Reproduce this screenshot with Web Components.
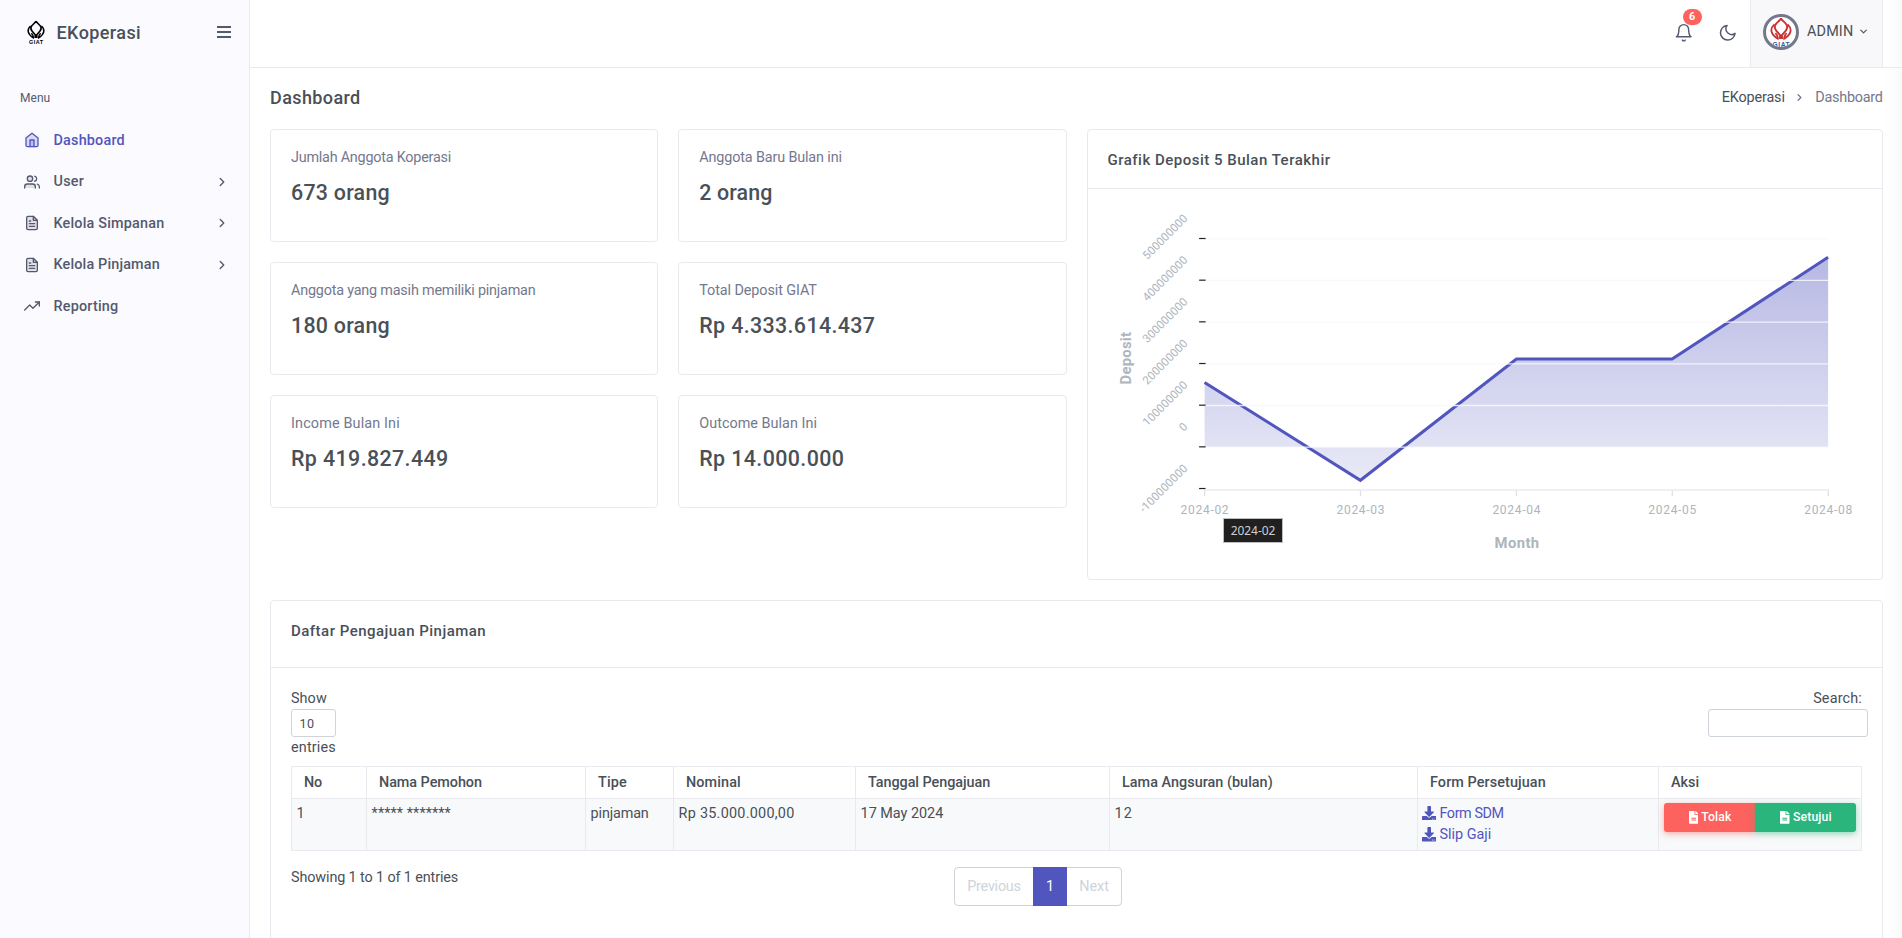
<!DOCTYPE html>
<html lang="id">
<head>
<meta charset="utf-8">
<title>EKoperasi - Dashboard</title>
<style>
html,body{margin:0;height:100%;overflow:hidden}
body{font-family:Roboto,"Noto Sans",sans-serif;font-size:14.4px;line-height:21.6px;color:#495057;background:#fff}
</style>
</head>
<body>
<ek-app></ek-app>
<script>
const define = (name, html, init) => {
  const tpl = document.createElement('template');
  tpl.innerHTML = html;
  customElements.define(name, class extends HTMLElement {
    connectedCallback() {
      if (this.shadowRoot) return;
      const root = this.attachShadow({ mode: 'open' });
      const copy = tpl.content.cloneNode(true);
      if (init) init.call(this, copy);
      root.appendChild(copy);
    }
  });
};

/* Inline text tracked to a given ink width (attribute w, px). */
const tracked = [];
customElements.define('ek-text', class extends HTMLElement {
  connectedCallback() {
    if (this.shadowRoot) return;
    this.attachShadow({ mode: 'open' }).innerHTML =
      '<style>:host{display:inline-block;white-space:nowrap}</style><slot></slot>';
    tracked.push(this);
  }
  track() {
    const w = parseFloat(this.getAttribute('w'));
    const n = this.textContent.length;
    if (!w || n < 2) return;
    this.style.letterSpacing = '0px';
    const natural = this.getBoundingClientRect().width;
    this.style.letterSpacing = ((w + .7 - natural) / (n - 1)).toFixed(3) + 'px';
  }
});

const ICONS = {
  home: '<path d="M3 9l9-7 9 7v11a2 2 0 0 1-2 2H5a2 2 0 0 1-2-2z"/><path d="M9 22V12h6v10"/>',
  users: '<path d="M17 21v-2a4 4 0 0 0-4-4H5a4 4 0 0 0-4 4v2"/><circle cx="9" cy="7" r="4"/><path d="M23 21v-2a4 4 0 0 0-3-3.87" fill="none"/><path d="M16 3.13a4 4 0 0 1 0 7.75" fill="none"/>',
  file: '<path d="M14 2H6a2 2 0 0 0-2 2v16a2 2 0 0 0 2 2h12a2 2 0 0 0 2-2V8z"/><path d="M14 2v6h6M16 13H8M16 17H8M10 9H8"/>',
  trend: '<path d="M23 6l-9.500 9.500-5-5L1 18" fill="none"/><path d="M17 6h6v6"/>',
  bell: '<path d="M18 8A6 6 0 0 0 6 8c0 7-3 9-3 9h18s-3-2-3-9" fill="none"/><path d="M13.730 21a2 2 0 0 1-3.460 0" fill="none"/>',
  moon: '<path d="M21 12.790A9 9 0 1 1 11.210 3 7 7 0 0 0 21 12.790z" fill="none"/>',
  right: '<path d="M9 18l6-6-6-6" fill="none"/>',
  down: '<path d="M6 9l6 6 6-6" fill="none"/>'
};
define('ek-icon', `<style>:host{display:inline-block;flex:none;width:16px;height:16px}svg{display:block;width:100%;height:100%;overflow:visible;fill:var(--icon-fill,none);stroke:currentColor;stroke-width:var(--icon-stroke,2);stroke-linecap:round;stroke-linejoin:round}</style><svg viewBox="0 0 24 24"></svg>`,
  function (c) { c.querySelector('svg').innerHTML = ICONS[this.getAttribute('name')]; });

define('ek-emblem', `<style>:host{display:block;width:18px;height:25px;flex:none}svg{display:block;width:100%;height:100%;overflow:visible;fill:none;stroke:var(--mark,#000)}text{font:700 5.400px "Liberation Sans",sans-serif;fill:var(--word,#000);stroke:none}</style>
<svg viewBox="0 0 18 25"><path d="M9 1.200C7.500 3.500 5.500 4.500 4.300 6.500C3.400 8.200 4 9.800 5.200 11.300L8.200 14.800V18M9 1.200C10.500 3.500 12.500 4.500 13.700 6.500C14.600 8.200 14 9.800 12.800 11.300L9.800 14.800V18" stroke-width="1.600"/><path d="M3.600 6C-.4 9.600 .4 14.200 6.400 17.800C6.700 16 5.800 14.600 4.400 13.200M14.400 6C18.400 9.600 17.600 14.200 11.600 17.800C11.300 16 12.200 14.600 13.600 13.200" stroke-width="1.500"/><text x="2" y="24.200" textLength="14">GIAT</text></svg>`);

define('ek-nav-item', `<style>
:host{display:flex;align-items:center;height:41.500px;padding:0 24px;color:#545a6d;font-weight:500;--icon-fill:rgba(84,90,109,.15)}
:host([active]){color:#5156be;--icon-fill:rgba(81,86,190,.2)}
.label{margin-left:13.500px;flex:1;padding-top:1px}
.more{width:14px;height:14px;margin-right:-3.700px;--icon-stroke:2.4}
</style><ek-icon class="lead"></ek-icon><span class="label"><slot></slot></span>`,
  function (c) {
    c.querySelector('.lead').setAttribute('name', this.getAttribute('icon'));
    if (this.hasAttribute('more')) {
      const m = document.createElement('ek-icon');
      m.className = 'more'; m.setAttribute('name', 'right');
      c.appendChild(m);
    }
  });

define('ek-sidebar', `<style>
:host{display:block;background:#fbfaff;border-right:1px solid #e9e9ef;box-sizing:border-box;width:250px}
header{display:flex;align-items:center;height:67px;box-sizing:border-box;padding:0 18px 3px 27px;margin-bottom:20.500px}
h1{margin:1.500px auto 0 11.500px;font-size:18px;font-weight:500;line-height:22px;color:#495057}
.burger{width:14px;height:12px;display:flex;flex-direction:column;justify-content:space-between}
.burger i{height:2px;background:#545a6d}
.title{font-size:12px;padding-left:20px;line-height:21px;height:32px;color:#545a6d}
</style>
<header><ek-emblem></ek-emblem><h1><ek-text w="83.500">EKoperasi</ek-text></h1><span class="burger"><i></i><i></i><i></i></span></header>
<div class="title"><ek-text w="29.500">Menu</ek-text></div>
<nav>
<ek-nav-item icon="home" active><ek-text w="70.500">Dashboard</ek-text></ek-nav-item>
<ek-nav-item icon="users" more><ek-text w="29.700">User</ek-text></ek-nav-item>
<ek-nav-item icon="file" more><ek-text w="110">Kelola Simpanan</ek-text></ek-nav-item>
<ek-nav-item icon="file" more><ek-text w="105.500">Kelola Pinjaman</ek-text></ek-nav-item>
<ek-nav-item icon="trend"><ek-text w="64">Reporting</ek-text></ek-nav-item>
</nav>`);

define('ek-topbar', `<style>
:host{display:flex;justify-content:flex-end;height:67px;border-bottom:1px solid #e9e9ef;color:#545a6d;padding-right:19px}
.tool{display:flex;align-items:center;position:relative;height:67px;padding-bottom:1px;box-sizing:border-box;--icon-stroke:1.800}
.tool ek-icon{width:19.500px;height:19.500px}
.bell{margin-right:24.500px}
.badge{position:absolute;left:9px;top:9px;width:19px;height:16px;border-radius:8px;background:#fd625e;color:#fff;font-size:10.800px;font-weight:700;line-height:16px;text-align:center}
.moon{margin-right:12.800px}
.user{display:flex;align-items:center;width:133px;height:67px;background:#f8f8fb;border:solid #e9e9ef;border-width:0 1px;padding-left:12px;box-sizing:border-box}
.pic{width:30px;height:30px;border:3px solid #74788d;border-radius:50%;overflow:hidden;background:#fff;display:flex;justify-content:center;margin-top:-3px;--mark:#cb3234;--word:#3c5a9c}
.pic ek-emblem{width:22px;height:30.500px}
.name{margin-left:8px;color:#495057;margin-top:-4px}
.user>ek-icon{width:11px;height:11px;margin-left:4.500px;margin-top:-5px}
</style>
<div class="tool bell"><ek-icon name="bell"></ek-icon><span class="badge">6</span></div>
<div class="tool moon"><ek-icon name="moon"></ek-icon></div>
<div class="user"><span class="pic"><ek-emblem></ek-emblem></span><span class="name"><ek-text w="45.500">ADMIN</ek-text></span><ek-icon name="down" style="--icon-stroke:2.800"></ek-icon></div>`);

define('ek-card', `<style>
:host{display:block;border:1px solid #e9e9ef;border-radius:4px;background:#fff;box-sizing:border-box;min-width:0}
header{padding:19px 20px 0;height:var(--head,58px);box-sizing:border-box;border-bottom:1px solid #e9e9ef;font-size:15px;font-weight:500;line-height:22px}
</style><header><slot name="title"></slot></header><slot></slot>`);

define('ek-stat', `<style>
:host{display:block;border:1px solid #e9e9ef;border-radius:4px;background:#fff;box-sizing:border-box;padding:20px;height:113px}
.label{line-height:16.400px;height:15.400px;overflow:hidden;color:#74788d;margin-bottom:15px}
.value{font-size:21.400px;line-height:25px;font-weight:500}
</style><div class="label"><slot name="label"></slot></div><div class="value"><slot></slot></div>`);

define('ek-area-chart', `<style>
:host{display:block;position:relative;height:390px}
svg{display:block;width:100%;height:100%}
text{fill:#adb5bd;font-family:Roboto,sans-serif}
.tick{font-size:12px}.title{font-size:14.800px;font-weight:700}
.tip{position:absolute;left:135.500px;top:329px;width:60px;height:25px;box-sizing:border-box;border:1px solid #bdbdbd;background:#202020;color:#d0d0d0;font:12px/23px "Noto Sans",sans-serif;text-align:center}
</style>
<svg viewBox="1087.900 189 794.500 390"><defs><linearGradient id="fill" gradientUnits="userSpaceOnUse" x1="0" y1="257" x2="0" y2="480"><stop offset="0" stop-color="#5156be" stop-opacity=".42"/><stop offset="1" stop-color="#5156be" stop-opacity=".125"/></linearGradient></defs>
<path d="M1204.500 447V382.700L1360.300 480.500L1516.300 359H1672L1828 257.300V447Z" fill="url(#fill)"/>
<path d="M1204.500 382.400L1360.300 480.300L1516.300 359H1672L1828 257.300" fill="none" stroke="#5156be" stroke-width="3"/>
<g class="grid"></g>
<path d="M1204.500 490H1828.500" stroke="#ebebeb" stroke-width="1.500"/>
<text class="title" transform="translate(1130.500 384.500) rotate(-90)" textLength="52.500">Deposit</text>
<text class="title" x="1494.500" y="548" textLength="44.500">Month</text>
</svg><div class="tip"><ek-text w="44">2024-02</ek-text></div>`,
  function (c) {
    let s = '';
    [500000000, 400000000, 300000000, 200000000, 100000000, 0, -100000000].forEach((v, i) => {
      const y = 238.800 + i * 41.670, t = String(v);
      const len = (t.replace('-', '').length * 6.450 + (v < 0 ? 4.300 : 0)).toFixed(1);
      if (i < 6) s += `<path d="M1204.500 ${y}H1828" stroke="#f8f8f8" stroke-width="1.300" stroke-opacity=".85"/>`;
      s += `<path d="M1199 ${y - .3}h6.500" stroke="#222" stroke-width="1.200"/>`;
      s += `<text class="tick" style="font-size:11.500px" transform="translate(1188.300 ${y - 19.700}) rotate(-45)" text-anchor="end" textLength="${len}">${t}</text>`;
    });
    ['2024-02', '2024-03', '2024-04', '2024-05', '2024-08'].forEach((t, i) => {
      const x = 1204.500 + i * 155.900;
      s += `<path d="M${x} 490v6" stroke="#e0e0e0" stroke-width="1.300"/><text class="tick" x="${x}" y="514" text-anchor="middle" textLength="48">${t}</text>`;
    });
    c.querySelector('.grid').innerHTML = s;
  });

define('ek-download', `<style>:host{display:flex;align-items:center;height:21.600px;color:#5156be}svg{width:14.400px;height:14.400px;fill:currentColor;margin:-1px 3px 0 -.5px}</style>
<svg viewBox="0 0 512 512"><path d="M216 0h80c13.300 0 24 10.700 24 24v168h87.700c17.800 0 26.700 21.500 14.100 34.100L269.700 378.300c-7.500 7.500-19.800 7.500-27.300 0L90.100 226.100c-12.600-12.600-3.700-34.100 14.100-34.100H192V24c0-13.300 10.700-24 24-24zm296 376v112c0 13.300-10.700 24-24 24H24c-13.300 0-24-10.700-24-24V376c0-13.300 10.700-24 24-24h146.700l49 49c20.100 20.100 52.500 20.100 72.600 0l49-49H488c13.300 0 24 10.700 24 24zm-124 88c0-11-9-20-20-20s-20 9-20 20 9 20 20 20 20-9 20-20zm64 0c0-11-9-20-20-20s-20 9-20 20 9 20 20 20 20-9 20-20z"/></svg><slot></slot>`);

define('ek-action', `<style>:host{display:flex;align-items:center;justify-content:center;height:29px;box-sizing:border-box;padding:1px 0 0 2px;color:#fff;background:var(--c);font-size:12.200px;font-weight:500;box-shadow:0 2px 6px 0 var(--s)}svg{width:9.500px;height:12.700px;fill:currentColor;margin-right:3px}</style>
<svg viewBox="0 0 384 512"><path d="M224 136V0H24C10.700 0 0 10.700 0 24v464c0 13.300 10.700 24 24 24h336c13.300 0 24-10.700 24-24V160H248c-13.200 0-24-10.800-24-24zM96 270h192v38H96zm0 75h192v38H96zM384 121.900v6.100H256V0h6.100c6.400 0 12.500 2.500 17 7l97.900 98c4.500 4.500 7 10.600 7 16.900z" fill-rule="evenodd"/></svg><slot></slot>`);

define('ek-pager', `<style>:host{display:flex;height:39px;width:168px;box-sizing:border-box;border:1px solid #ced4da;border-radius:4px;color:#ced4da}
span{display:flex;align-items:center;justify-content:center;box-sizing:border-box}
.p{flex:1}.n{width:54px}.a{width:34px;margin:-1px 0;background:#5156be;color:#fff}</style>
<span class="p"><ek-text w="53">Previous</ek-text></span><span class="a">1</span><span class="n"><ek-text w="29">Next</ek-text></span>`);

define('ek-loans', `<style>
:host{display:block;padding:20px 20px 0}
.tools{display:flex;justify-content:space-between;height:77.600px}
.len{width:45px}
.box{box-sizing:border-box;height:28px;margin-top:-.8px;margin-bottom:.4px;border:1px solid #ced4da;border-radius:3px;background:#fff}
.len .box{font-size:12.600px;line-height:28px;padding-left:7.500px}
.find{text-align:right;width:200px}
.find .box{width:160px;margin-left:auto;margin-right:-5.500px;position:relative}
table{border-collapse:collapse;table-layout:fixed;width:1570.500px}
th,td{border:1px solid #e9e9ef;text-align:left;box-sizing:border-box}
th{height:32px;padding:1px 0 0 12px;font-weight:500;vertical-align:middle;line-height:21.600px}
td{height:52px;padding:4px 4.600px 0;vertical-align:top;background:#f8f9fa;line-height:21.600px}
.acts{display:flex}
.foot{display:flex;margin-top:16.400px}
.info{flex:0 0 663px}
</style>
<div class="tools"><div class="len"><ek-text w="35">Show</ek-text><div class="box"><ek-text w="14">10</ek-text></div><ek-text w="44">entries</ek-text></div>
<div class="find"><ek-text w="48">Search:</ek-text><div class="box"></div></div></div>
<table><colgroup><col style="width:75px"><col style="width:219px"><col style="width:88px"><col style="width:182px"><col style="width:254px"><col style="width:308px"><col style="width:241px"><col style="width:203px"></colgroup>
<tr><th><ek-text w="17.500">No</ek-text></th><th><ek-text w="102.300">Nama Pemohon</ek-text></th><th><ek-text w="28">Tipe</ek-text></th><th><ek-text w="54">Nominal</ek-text></th><th><ek-text w="121.500">Tanggal Pengajuan</ek-text></th><th><ek-text w="150">Lama Angsuran (bulan)</ek-text></th><th><ek-text w="115">Form Persetujuan</ek-text></th><th><ek-text w="27.500">Aksi</ek-text></th></tr>
<tr><td>1</td><td><ek-text w="78.500">***** *******</ek-text></td><td><ek-text w="57.500">pinjaman</ek-text></td><td><ek-text w="115">Rp 35.000.000,00</ek-text></td><td><ek-text w="82">17 May 2024</ek-text></td><td><ek-text w="16.500">12</ek-text></td>
<td><ek-download><ek-text w="64">Form SDM</ek-text></ek-download><ek-download><ek-text w="51">Slip Gaji</ek-text></ek-download></td>
<td><div class="acts"><ek-action style="width:91px;--c:#fd625e;--s:rgba(253,98,94,.5);border-radius:3px 0 0 3px"><ek-text w="29.500">Tolak</ek-text></ek-action><ek-action style="width:101px;--c:#2ab57d;--s:rgba(42,181,125,.5);border-radius:0 3px 3px 0"><ek-text w="38">Setujui</ek-text></ek-action></div></td></tr></table>
<div class="foot"><div class="info"><ek-text w="166.500">Showing 1 to 1 of 1 entries</ek-text></div><ek-pager></ek-pager></div>`);

define('ek-app', `<style>
:host{display:grid;grid-template-columns:250px 1fr;height:100vh;overflow:hidden}
.page{min-width:0;background:linear-gradient(to left,#fafafb,#fff 18px)}
main{padding:19px 19px 0 20px}
.head{display:flex;justify-content:space-between;height:23px;margin-bottom:19px}
h2{margin:0;font-size:18px;line-height:22px;font-weight:500}
.crumbs{display:flex;align-items:center;height:21.500px}
.crumbs ek-icon{width:11px;height:11px;margin:0 10.500px 0 9px;color:#74788d;--icon-stroke:2.800}
.here{color:#74788d;margin-right:.3px}
.top{display:grid;grid-template-columns:388.250px 388.250px 1fr;grid-template-rows:113px 113px 113px 52px;gap:20px;margin-bottom:20px}
.chart{grid-column:3;grid-row:1/5;height:451px;--head:59px}
.list{height:400px;--head:67px}
</style>
<ek-sidebar></ek-sidebar>
<div class="page"><ek-topbar></ek-topbar><main>
<div class="head"><h2><ek-text w="89.500">Dashboard</ek-text></h2><div class="crumbs"><ek-text w="62.500">EKoperasi</ek-text><ek-icon name="right"></ek-icon><span class="here"><ek-text w="67">Dashboard</ek-text></span></div></div>
<div class="top">
<ek-stat><ek-text slot="label" w="159.500">Jumlah Anggota Koperasi</ek-text><ek-text w="98">673 orang</ek-text></ek-stat>
<ek-stat><ek-text slot="label" w="142">Anggota Baru Bulan ini</ek-text><ek-text w="72.500">2 orang</ek-text></ek-stat>
<ek-card class="chart"><ek-text slot="title" w="221.500">Grafik Deposit 5 Bulan Terakhir</ek-text><ek-area-chart></ek-area-chart></ek-card>
<ek-stat><ek-text slot="label" w="244">Anggota yang masih memiliki pinjaman</ek-text><ek-text w="98">180 orang</ek-text></ek-stat>
<ek-stat><ek-text slot="label" w="117">Total Deposit GIAT</ek-text><ek-text w="175">Rp 4.333.614.437</ek-text></ek-stat>
<ek-stat><ek-text slot="label" w="108">Income Bulan Ini</ek-text><ek-text w="156.500">Rp 419.827.449</ek-text></ek-stat>
<ek-stat><ek-text slot="label" w="117">Outcome Bulan Ini</ek-text><ek-text w="144">Rp 14.000.000</ek-text></ek-stat>
</div>
<ek-card class="list"><ek-text slot="title" w="194">Daftar Pengajuan Pinjaman</ek-text><ek-loans></ek-loans></ek-card>
</main></div>`);

tracked.forEach(t => t.track());
</script>
</body>
</html>
